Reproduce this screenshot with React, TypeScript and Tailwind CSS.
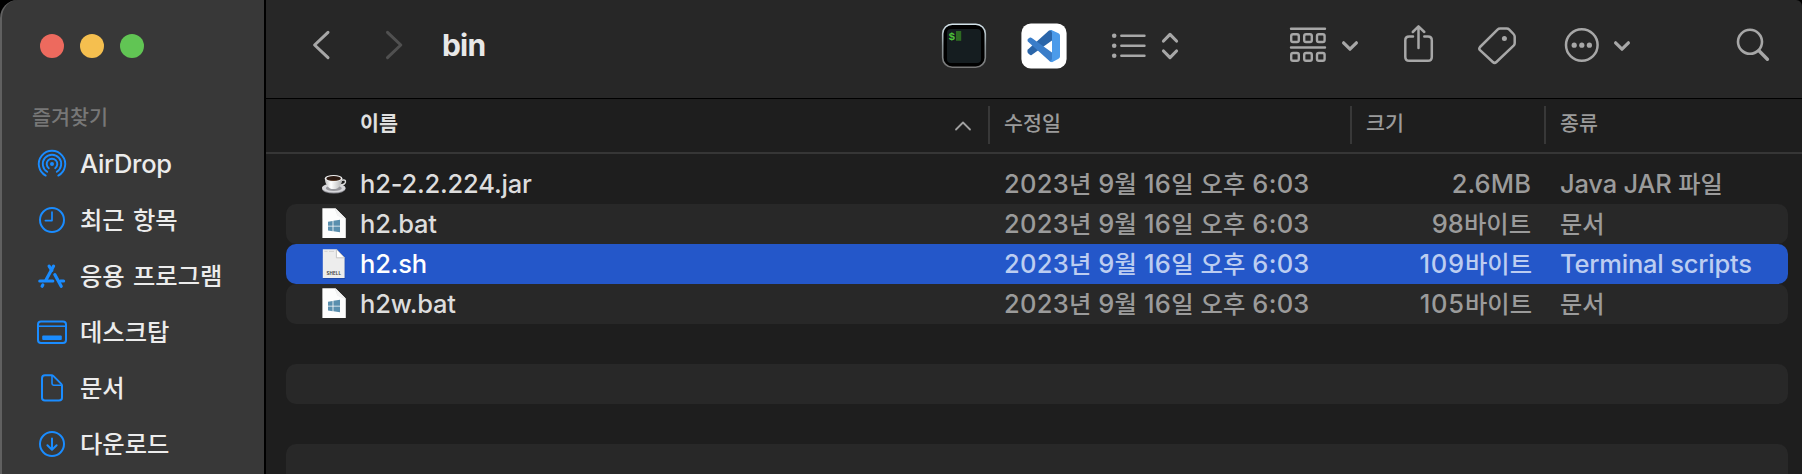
import React from "react";

const HANGUL = /([\u3131-\u318e\uac00-\ud7a3]+)/;

/** Renders Latin and Hangul runs side by side, each in its own face and size. */
function Mixed({ text, hangul, latin = "" }: { text: string; hangul: string; latin?: string }) {
  return (
    <>
      {text.split(HANGUL).map((run, i) =>
        HANGUL.test(run) ? (
          <span key={i} className={`font-['Noto_Sans_CJK_KR',sans-serif] leading-none ${hangul}`}>
            {run}
          </span>
        ) : (
          <span key={i} className={`leading-none ${latin}`}>
            {run}
          </span>
        ),
      )}
    </>
  );
}

function AirDropIcon() {
  return (
    <svg className="h-[32px] w-[32px]" viewBox="-16 -16 32 32" fill="none" stroke="#1a8cff" strokeWidth="1.9" strokeLinecap="round">
      <circle r="2" fill="#1a8cff" stroke="none" />
      <path d="M-3.2 4.2A5.3 5.3 0 1 1 3.2 4.2" />
      <path d="M-4.8 7.8A9.2 9.2 0 1 1 4.8 7.8" />
      <path d="M-6.3 11.6A13.2 13.2 0 1 1 6.3 11.6" />
    </svg>
  );
}

function ClockIcon() {
  return (
    <svg className="h-[32px] w-[32px]" viewBox="-16 -16 32 32" fill="none" stroke="#1a8cff" strokeWidth="2" strokeLinecap="round" strokeLinejoin="round">
      <circle r="12" />
      <path d="M0 -8V0.6H-6.6" strokeWidth="1.7" />
    </svg>
  );
}

function AppsIcon() {
  return (
    <svg className="h-[32px] w-[32px]" viewBox="-16 -16 32 32" fill="none" stroke="#1a8cff" strokeWidth="3.2" strokeLinecap="round">
      <path d="M-12.2 5H0.8" />
      <path d="M8.4 5H11.6" />
      <path d="M1.6 -9.9L-6 4" />
      <path d="M-2.9 -9.9L-0.2 -5.6" />
      <path d="M2.8 -1.4L9.2 10.3" />
      <path d="M-9.2 9L-9.9 10.2" />
    </svg>
  );
}

function DesktopIcon() {
  return (
    <svg className="h-[32px] w-[32px]" viewBox="-16 -16 32 32" fill="none" stroke="#1a8cff" strokeWidth="2">
      <rect x="-14" y="-10.5" width="28" height="21.5" rx="3" />
      <path d="M-14 -5.8H14" strokeWidth="1.6" />
      <rect x="-9.8" y="3.6" width="19.6" height="4.4" rx="1" fill="#1a8cff" stroke="none" />
    </svg>
  );
}

function DocIcon() {
  return (
    <svg className="h-[32px] w-[32px]" viewBox="-16 -16 32 32" fill="none" stroke="#1a8cff" strokeWidth="2" strokeLinejoin="round">
      <path d="M-10 -9.8Q-10 -12.8 -7 -12.8H-0.6Q0.6 -12.8 1.5 -11.9L9 -4.4Q10 -3.4 10 -2.2V9.8Q10 12.6 7 12.6H-7Q-10 12.6 -10 9.8Z" />
      <path d="M0 -12.4V-4.4Q0 -2.8 1.6 -2.8H9.8" strokeWidth="1.6" />
    </svg>
  );
}

function DownloadIcon() {
  return (
    <svg className="h-[32px] w-[32px]" viewBox="-16 -16 32 32" fill="none" stroke="#1a8cff" strokeWidth="2" strokeLinecap="round" strokeLinejoin="round">
      <circle r="12" />
      <path d="M0 -5.5V5.6M-4.6 1.2L0 5.8L4.6 1.2" />
    </svg>
  );
}

const places = [
  { label: "AirDrop", Icon: AirDropIcon },
  { label: "최근 항목", Icon: ClockIcon },
  { label: "응용 프로그램", Icon: AppsIcon },
  { label: "데스크탑", Icon: DesktopIcon },
  { label: "문서", Icon: DocIcon },
  { label: "다운로드", Icon: DownloadIcon },
];

function Sidebar() {
  return (
    <aside className="flex h-full w-[266px] shrink-0 flex-col overflow-hidden rounded-tl-[18px] border-r-2 border-l-2 border-r-black border-l-[#606060] bg-[#383838]">
      <div className="flex gap-4 pt-[34px] pl-[38px]">
        <span className="size-6 rounded-full bg-[#ed6a5e]" />
        <span className="size-6 rounded-full bg-[#f5bf4f]" />
        <span className="size-6 rounded-full bg-[#61c554]" />
      </div>
      <div className="mt-[42px] mb-[3px] flex h-[33px] items-center pl-[30px] font-['Noto_Sans_CJK_KR',sans-serif] text-[20.7px] font-medium text-[#777777]">
        즐겨찾기
      </div>
      <ul>
        {places.map(({ label, Icon }) => (
          <li key={label} className="flex h-14 items-center pl-[34px] text-[25.5px] text-[#ececec]">
            <Icon />
            <span className="ml-[12px] leading-[32px] font-medium whitespace-pre">
              <Mixed text={label} hangul="text-[24.3px] font-medium" latin={label.includes(" ") ? "tracking-[1.4px]" : "tracking-[-0.3px]"} />
            </span>
          </li>
        ))}
      </ul>
    </aside>
  );
}

function Toolbar() {
  return (
    <header className="flex h-[98px] shrink-0 items-center bg-[#272727] text-[#a7a7a7]">
      <svg className="ml-[42px] h-[98px] w-[26px]" viewBox="308 0 26 98" fill="none" stroke="#a7a7a7" strokeWidth="3" strokeLinecap="round" strokeLinejoin="round">
        <path d="M328 32.3L314.6 45L328 57.7" />
      </svg>
      <svg className="ml-[47px] h-[98px] w-[26px]" viewBox="381 0 26 98" fill="none" stroke="#505050" strokeWidth="3" strokeLinecap="round" strokeLinejoin="round">
        <path d="M387.5 32.3L400.8 45L387.5 57.7" />
      </svg>
      <h1 className="mb-[8px] ml-[35px] w-[497px] text-[30px] leading-none font-bold tracking-[-0.8px] text-[#e8e8e8]">bin</h1>
      <svg className="h-[98px] w-[50px]" viewBox="939 0 50 98">
        <defs>
          <linearGradient id="rim" x1="0" y1="0" x2="0" y2="1">
            <stop offset="0" stopColor="#d3e3ea" />
            <stop offset="0.5" stopColor="#8b9498" />
            <stop offset="1" stopColor="#777777" />
          </linearGradient>
        </defs>
        <rect x="942.7" y="24.2" width="42.6" height="43" rx="9.5" fill="#000000" stroke="url(#rim)" strokeWidth="1.6" />
        <rect x="947" y="29" width="34" height="34" rx="4" fill="#151d20" />
        <text x="948.4" y="39.8" fontSize="11" fontWeight="700" fontFamily="Liberation Mono, monospace" fill="#4fc43a">
          $
        </text>
        <rect x="956" y="31" width="5.2" height="9.8" fill="#2d6a22" />
      </svg>
      <svg className="ml-[30px] h-[98px] w-[50px]" viewBox="1019 0 50 98">
        <rect x="1021.4" y="23.4" width="45.2" height="45.2" rx="9.5" fill="#ffffff" />
        <path d="M1027.6 49.8L1049 30.6L1052 30V40.5L1031.6 55Q1030.6 55.5 1029.8 54.8L1027.8 53Q1027 51 1027.6 49.8Z" fill="#2a65a9" />
        <path d="M1027.8 38.9L1030 37.5Q1031 37.2 1031.8 37.9L1052 52.5V62L1050 61.5L1027.8 41.5Q1027.2 40 1027.8 38.9Z" fill="#3a7dc9" />
        <path d="M1051.4 30L1058.5 33.2Q1060 34 1060 35.6V56.6Q1060 58 1058.5 58.8L1052 62.2L1049.6 61.2Q1052 61 1052 59V33Q1052 31 1049.8 30.6Z" fill="#4c9bea" />
      </svg>
      <svg className="ml-[41px] h-[98px] w-[40px]" viewBox="1110 0 40 98" fill="none" stroke="#a7a7a7" strokeWidth="2.4" strokeLinecap="round">
        <g fill="#a7a7a7" stroke="none">
          <circle cx="1114.2" cy="35.8" r="2.3" />
          <circle cx="1114.2" cy="45.8" r="2.3" />
          <circle cx="1114.2" cy="55.8" r="2.3" />
        </g>
        <path d="M1121.3 35.8H1144.5M1121.3 45.8H1144.5M1121.3 55.8H1144.5" />
      </svg>
      <svg className="ml-[8px] h-[98px] w-[24px]" viewBox="1158 0 24 98" fill="none" stroke="#a7a7a7" strokeWidth="3.2" strokeLinecap="round" strokeLinejoin="round">
        <path d="M1163.5 41L1170 34.4L1176.5 41M1163.5 51L1170 57.6L1176.5 51" />
      </svg>
      <svg className="ml-[104px] h-[98px] w-[44px]" viewBox="1286 0 44 98" fill="none" stroke="#a7a7a7" strokeWidth="2.4" strokeLinecap="round">
        <path d="M1291 28.7H1325M1291 47.5H1325" />
        <rect x="1291.2" y="34.2" width="7.6" height="7.8" rx="1.8" />
        <rect x="1304.2" y="34.2" width="7.6" height="7.8" rx="1.8" />
        <rect x="1317" y="34.2" width="7.6" height="7.8" rx="1.8" />
        <rect x="1291.2" y="53" width="7.6" height="7.8" rx="1.8" />
        <rect x="1304.2" y="53" width="7.6" height="7.8" rx="1.8" />
        <rect x="1317" y="53" width="7.6" height="7.8" rx="1.8" />
      </svg>
      <svg className="ml-[8px] h-[98px] w-[24px]" viewBox="1338 0 24 98" fill="none" stroke="#a7a7a7" strokeWidth="3.2" strokeLinecap="round" strokeLinejoin="round">
        <path d="M1343.6 42.8L1350 49.2L1356.4 42.8" />
      </svg>
      <svg className="ml-[38px] h-[98px] w-[36px]" viewBox="1400 0 36 98" fill="none" stroke="#a7a7a7" strokeWidth="2.5" strokeLinecap="round" strokeLinejoin="round">
        <path d="M1413 36.6H1409.2Q1405.3 36.6 1405.3 40.4V57Q1405.3 60.8 1409.2 60.8H1428Q1431.8 60.8 1431.8 57V40.4Q1431.8 36.6 1428 36.6H1424.3" />
        <path d="M1418.5 48V26.5M1412.8 32L1418.5 26.4L1424.3 32" />
      </svg>
      <svg className="ml-[38px] h-[98px] w-[46px]" viewBox="1474 0 46 98" fill="none" stroke="#a7a7a7" strokeWidth="2.5" strokeLinejoin="round">
        <path d="M1480 47L1497.5 29.7Q1498.6 28.6 1500.2 28.6H1506.6Q1508.2 28.6 1509.3 29.7L1513.5 34Q1514.7 35.2 1514.7 36.8V43Q1514.7 44.5 1513.6 45.7L1496.4 62Q1494.6 63.7 1492.8 62L1480 50.2Q1478.6 48.6 1480 47Z" />
        <circle cx="1504.4" cy="38.5" r="2.5" fill="#a7a7a7" stroke="none" />
      </svg>
      <svg className="ml-[42px] h-[98px] w-[40px]" viewBox="1562 0 40 98" fill="none" stroke="#a7a7a7" strokeWidth="2.5">
        <circle cx="1581.8" cy="45" r="15.8" />
        <g fill="#a7a7a7" stroke="none">
          <circle cx="1574.2" cy="45.2" r="2.6" />
          <circle cx="1581.8" cy="45.2" r="2.6" />
          <circle cx="1589.4" cy="45.2" r="2.6" />
        </g>
      </svg>
      <svg className="ml-[8px] h-[98px] w-[24px]" viewBox="1610 0 24 98" fill="none" stroke="#a7a7a7" strokeWidth="3.2" strokeLinecap="round" strokeLinejoin="round">
        <path d="M1615.6 42.8L1622 49.2L1628.4 42.8" />
      </svg>
      <svg className="ml-[98px] h-[98px] w-[42px]" viewBox="1732 0 42 98" fill="none" stroke="#a7a7a7" strokeLinecap="round">
        <circle cx="1750" cy="41.8" r="12" strokeWidth="2.6" />
        <path d="M1759 50.8L1767.4 59.2" strokeWidth="3.4" />
      </svg>
    </header>
  );
}

function ColumnHeader() {
  return (
    <div className="flex h-14 shrink-0 items-start border-t border-b-2 border-t-black border-b-[#363636] bg-[#1e1e1e] pt-[7px] font-['Noto_Sans_CJK_KR',sans-serif] text-[20.6px] leading-[33px] font-medium text-[#9b9b9b]">
      <div className="flex w-[722px] justify-between pr-[16px] pl-[94px] font-bold text-[#e0e0e0]">
        <span>이름</span>
        <svg className="mt-[14px] h-[12px] w-[18px]" viewBox="0 0 18 12" fill="none" stroke="#a0a0a0" strokeWidth="1.8" strokeLinecap="round" strokeLinejoin="round">
          <path d="M2 9.5L9 2.5L16 9.5" />
        </svg>
      </div>
      <div className="h-[38px] w-[362px] border-l-2 border-[#383838] pl-[14px]">수정일</div>
      <div className="h-[38px] w-[194px] border-l-2 border-[#383838] pl-[14px]">크기</div>
      <div className="h-[38px] flex-1 border-l-2 border-[#383838] pl-[14px]">종류</div>
    </div>
  );
}

function JarIcon() {
  return (
    <svg className="h-[30px] w-[26px]" viewBox="0 0 26 30">
      <defs>
        <linearGradient id="cup" x1="0" y1="0" x2="1" y2="0">
          <stop offset="0" stopColor="#bdbdbd" />
          <stop offset="0.35" stopColor="#ffffff" />
          <stop offset="1" stopColor="#b0b0b0" />
        </linearGradient>
      </defs>
      <ellipse cx="11.8" cy="19.8" rx="11.8" ry="4.8" fill="#8a8a90" />
      <ellipse cx="11.8" cy="18.9" rx="11.8" ry="4.6" fill="#d6d6d9" />
      <ellipse cx="11.8" cy="19.2" rx="8" ry="2.8" fill="#96969b" />
      <path d="M19.5 11.2Q24 10.2 23.4 13.2Q22.6 15.8 18.4 16" fill="none" stroke="#dcdcdc" strokeWidth="1.5" />
      <path d="M2.8 9.8Q3.2 16.4 8 19.4Q11.6 20.7 15.2 19.4Q20 16.4 20.4 9.8Z" fill="url(#cup)" />
      <ellipse cx="11.6" cy="9.4" rx="8.8" ry="3.4" fill="#f1f1f1" />
      <ellipse cx="11.6" cy="9.6" rx="7.3" ry="2.5" fill="#2b1a12" />
      <path d="M6 10.6Q11.6 12.9 17.2 10.6Q11.6 11.7 6 10.6Z" fill="#8d5a35" />
    </svg>
  );
}

function BatIcon() {
  return (
    <svg className="-mt-[2px] h-[30px] w-[26px]" viewBox="0 0 26 30">
      <path d="M0.4 0.2H13.4L23.8 10.6V30H0.4Z" fill="#fdfdfd" />
      <path d="M13.4 0.2V2.2L15.6 7.6L21.6 10.2L23.8 10.6Z" fill="#dedede" />
      <path d="M13.6 0.4L14.8 6.6Q15.2 8.2 17 8.6L23.6 10.4L18 5Z" fill="#f3f3f3" />
      <path d="M6 13.7L10.6 13V17.7H6ZM11.4 12.8L18 11.8V17.7H11.4ZM6 18.5H10.6V23.2L6 22.6ZM11.4 18.5H18V24.2L11.4 23.3Z" fill="#5a8fae" />
    </svg>
  );
}

function ShellIcon() {
  return (
    <svg className="h-[30px] w-[26px]" viewBox="0 0 26 30">
      <path d="M0.8 0.8H14.6L22.6 8.8V29.6H0.8Z" fill="#1b3f93" opacity="0.6" transform="translate(0.5 0.6)" />
      <path d="M0.8 0.2H14.6L22.6 8.8V29H0.8Z" fill="#ededed" />
      <path d="M14.4 0.2V8.8H22.6Z" fill="#ffffff" stroke="#b9b9b9" strokeWidth="0.8" />
      <path d="M2.4 2.4H5.5M7 2.4H12" stroke="#bdbdbd" strokeWidth="0.6" />
      <text x="11.8" y="26.2" textAnchor="middle" fontSize="4.4" fontWeight="700" letterSpacing="0.2" fontFamily="Inter, sans-serif" fill="#444444">
        SHELL
      </text>
    </svg>
  );
}

const files = [
  { name: "h2-2.2.224.jar", size: "2.6MB", kind: "Java JAR 파일", Icon: JarIcon },
  { name: "h2.bat", size: "98바이트", kind: "문서", Icon: BatIcon },
  { name: "h2.sh", size: "109바이트", kind: "Terminal scripts", Icon: ShellIcon, selected: true },
  { name: "h2w.bat", size: "105바이트", kind: "문서", Icon: BatIcon },
];

function FileList() {
  return (
    <div className="flex min-h-0 flex-1 flex-col overflow-hidden bg-[#1e1e1e] pt-[10px] pr-[14px] pl-[20px]">
      {files.map(({ name, size, kind, Icon, selected }, i) => (
        <div
          key={name}
          className={`flex h-10 shrink-0 items-center rounded-[10px] pl-9 text-[25.5px] leading-10 font-[450] whitespace-pre ${
            selected ? "bg-[#2457c9] text-[#bccdf1]" : i % 2 ? "bg-[#282828] text-[#9b9b9b]" : "text-[#9b9b9b]"
          }`}
        >
          <Icon />
          <span className={`ml-[12px] w-[644px] tracking-[-0.2px] ${selected ? "text-white" : "text-[#dddddd]"}`}>{name}</span>
          <span className="w-[340px]">
            <Mixed text="2023년 9월 16일 오후 6:03" hangul="text-[24.3px]" latin="tracking-[0.25px]" />
          </span>
          <span className={`w-[188px] text-right ${size.length > 5 ? "pr-0" : "pr-px"}`}>
            <Mixed text={size} hangul="text-[24.3px]" latin={size.length > 5 ? "tracking-[0.8px]" : "tracking-[0.1px]"} />
          </span>
          <span className="ml-[28px]">
            <Mixed text={kind} hangul="text-[24.2px]" latin="tracking-[-0.2px]" />
          </span>
        </div>
      ))}
      <div className="mt-10 h-10 shrink-0 rounded-[10px] bg-[#282828]" />
      <div className="mt-10 h-10 shrink-0 rounded-[10px] bg-[#282828]" />
    </div>
  );
}

export default function App() {
  return (
    <div className="flex h-[474px] w-[1802px] overflow-hidden bg-black font-['Inter','Noto_Sans_CJK_KR',sans-serif]">
      <Sidebar />
      <main className="flex min-w-0 flex-1 flex-col overflow-hidden rounded-tr-[6px]">
        <Toolbar />
        <ColumnHeader />
        <FileList />
      </main>
    </div>
  );
}
